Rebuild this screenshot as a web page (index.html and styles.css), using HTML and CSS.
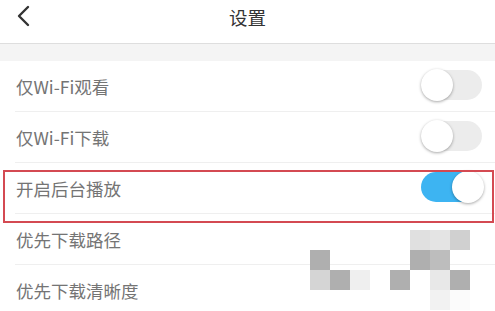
FILE: index.html
```html
<!DOCTYPE html>
<html lang="zh">
<head>
<meta charset="utf-8">
<link rel="stylesheet" href="styles.css">
</head>
<body>
<div class="page">
  <header class="topbar">
    <svg class="back" width="14" height="22" viewBox="0 0 14 22"><path d="M12 2 L3 11 L12 20" fill="none" stroke="#333" stroke-width="2.4" stroke-linecap="round" stroke-linejoin="round"/></svg>
    <div class="title">设置</div>
  </header>
  <div class="band"></div>
  <ul class="list">
    <li class="row"><span class="label">仅Wi-Fi观看</span><span class="toggle"><span class="knob"></span></span></li>
    <li class="row"><span class="label">仅Wi-Fi下载</span><span class="toggle"><span class="knob"></span></span></li>
    <li class="row"><span class="label">开启后台播放</span><span class="toggle on"><span class="knob"></span></span></li>
    <li class="row"><span class="label">优先下载路径</span></li>
    <li class="row"><span class="label">优先下载清晰度</span></li>
  </ul>
  <div class="highlight"></div>
  <div class="mosaic">
    <i></i><i></i><i></i><i></i><i></i><i class="c1"></i><i class="c2"></i><i class="c3"></i>
    <i class="c4"></i><i></i><i></i><i></i><i></i><i class="c4"></i><i class="c5"></i><i></i>
    <i class="c6"></i><i class="c4"></i><i class="c7"></i><i></i><i class="c4"></i><i></i><i class="c8"></i><i class="c4"></i>
    <i></i><i></i><i></i><i></i><i></i><i></i><i class="c9"></i><i class="c10"></i>
  </div>
</div>
</body>
</html>
```
FILE: styles.css
```css
* { box-sizing: border-box; }
html, body { margin: 0; padding: 0; background: #fff; }
body { font-family: "Noto Sans CJK SC", "Noto Sans", sans-serif; }
.page { position: relative; width: 495px; height: 311px; overflow: hidden; background: #fff; }
.topbar { position: relative; height: 44px; border-bottom: 1px solid #dedede; display: flex; align-items: flex-start; justify-content: center; }
.back { position: absolute; left: 16px; top: 5px; }
.title { font-size: 18.5px; line-height: 22px; margin-top: 6px; color: #333; }
.band { height: 17px; background: #f4f4f4; }
.list { list-style: none; margin: 0; padding: 0; }
.row { height: 51px; margin-left: 15px; padding-right: 13px; border-bottom: 1px solid #efefef; display: flex; align-items: center; justify-content: space-between; }
.label { font-size: 17.5px; color: #747474; margin-left: 1px; margin-top: 0; }
.toggle { position: relative; width: 61px; height: 30px; border-radius: 15px; background: #ececec; margin-top: -3px; }
.knob { position: absolute; left: 0; top: -1px; width: 32px; height: 32px; border-radius: 50%; background: #fff; box-shadow: 0 1px 3px rgba(0,0,0,0.35); }
.toggle.on { background: #3db4f2; }
.toggle.on .knob { left: auto; right: -2px; }
.highlight { position: absolute; left: 3px; top: 170px; width: 491px; height: 53px; border: 2px solid #d44a52; }
.mosaic { position: absolute; left: 310px; top: 230px; display: grid; grid-template-columns: repeat(8, 20px); grid-template-rows: repeat(4, 20px); }
.mosaic i { display: block; }
.mosaic .c1 { background: #e0e0e0; }
.mosaic .c2 { background: #e4e4e4; }
.mosaic .c3 { background: #d0d0d0; }
.mosaic .c4 { background: #afafaf; }
.mosaic .c5 { background: #bdbdbd; }
.mosaic .c6 { background: #d5d5d5; }
.mosaic .c7 { background: #efefef; }
.mosaic .c8 { background: #e8e8e8; }
.mosaic .c9 { background: #f2f2f2; }
.mosaic .c10 { background: #fbfbfb; }
```
